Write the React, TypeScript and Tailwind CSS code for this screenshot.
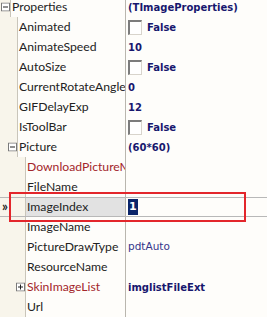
import React from "react";

const NAME_FONT = { fontFamily: 'Lato, "Noto Sans", sans-serif' };
const VAL_FONT = { fontFamily: '"DejaVu Sans", Verdana, sans-serif' };

function Expander({ open }: { open: boolean }) {
  return (
    <svg width="9" height="9" viewBox="0 0 9 9" className="block">
      <rect x="0.5" y="0.5" width="8" height="8" fill="#ffffff" stroke="#7a7a7a" />
      <line x1="2" y1="4.5" x2="7" y2="4.5" stroke="#222" />
      {!open && <line x1="4.5" y1="2" x2="4.5" y2="7" stroke="#222" />}
    </svg>
  );
}

function Check() {
  return (
    <div className="w-[14px] h-[15px] bg-white border-t-2 border-l-2 border-t-[#7c7c7c] border-l-[#7c7c7c] border-r border-b border-r-[#d8d4cc] border-b-[#d8d4cc] mr-[5px] shrink-0" />
  );
}

type RowProps = {
  indent: number;
  label: string;
  red?: boolean;
  expander?: "open" | "closed";
  value?: React.ReactNode;
  selected?: boolean;
};

function Row({ indent, label, red, expander, value, selected }: RowProps) {
  return (
    <div className={`flex h-[20px] ${selected ? "border-t border-b border-[#b8b8b8]" : ""}`}>
      <div className="relative shrink-0 bg-[#f8f5eb]" style={{ width: indent }}>
        {expander && (
          <div className="absolute top-1/2 -translate-y-1/2" style={{ left: indent - 9 }}>
            <Expander open={expander === "open"} />
          </div>
        )}
        {selected && (
          <div className="absolute left-[2px] top-[0px] text-[13px] leading-[16px] text-[#222] font-bold" style={NAME_FONT}>
            »
          </div>
        )}
      </div>
      <div
        className={`flex items-center border-l border-[#c9c5ba] pl-[1px] overflow-hidden whitespace-nowrap text-[12.2px] ${
          selected ? "bg-[#e2e2e2]" : "bg-[#fefdfa]"
        } ${red ? "text-[#a3262b]" : "text-[#222]"}`}
        style={{ ...NAME_FONT, width: 125 - indent }}
      >
        {label}
      </div>
      <div className="flex-1 flex items-center border-l border-[#b9b6ae] pl-[2px] bg-[#fefdfa] whitespace-nowrap overflow-hidden">
        {value}
      </div>
    </div>
  );
}

const B = ({ children }: { children: React.ReactNode }) => (
  <span className="font-bold text-[#17176e] text-[10px]" style={VAL_FONT}>
    {children}
  </span>
);

const N = ({ children }: { children: React.ReactNode }) => (
  <span className="text-[#35358a] text-[10.5px]" style={VAL_FONT}>
    {children}
  </span>
);

export default function App() {
  return (
    <div className="relative w-[267px] h-[317px] overflow-hidden bg-[#fefdfa]">
      <div className="-mt-[3px]">
        <Row indent={10} label="Properties" expander="open" value={<B>(TImageProperties)</B>} />
        <Row indent={17} label="Animated" value={<><Check /><B>False</B></>} />
        <Row indent={17} label="AnimateSpeed" value={<B>10</B>} />
        <Row indent={17} label="AutoSize" value={<><Check /><B>False</B></>} />
        <Row indent={17} label="CurrentRotateAngle" value={<B>0</B>} />
        <Row indent={17} label="GIFDelayExp" value={<B>12</B>} />
        <Row indent={17} label="IsToolBar" value={<><Check /><B>False</B></>} />
        <Row indent={17} label="Picture" expander="open" value={<B>(60*60)</B>} />
        <Row indent={25} label="DownloadPictureMode" red />
        <Row indent={25} label="FileName" />
        <Row
          indent={25}
          label="ImageIndex"
          selected
          value={
            <span className="bg-[#0a2468] text-white font-bold text-[11px] px-[1px]" style={VAL_FONT}>
              1
            </span>
          }
        />
        <Row indent={25} label="ImageName" />
        <Row indent={25} label="PictureDrawType" value={<N>pdtAuto</N>} />
        <Row indent={25} label="ResourceName" />
        <Row indent={25} label="SkinImageList" red expander="closed" value={<B>imglistFileExt</B>} />
        <Row indent={25} label="Url" />
      </div>
      <div className="absolute left-[9px] top-[192px] w-[237px] h-[30px] border-2 border-[#e3262b]" />
    </div>
  );
}
